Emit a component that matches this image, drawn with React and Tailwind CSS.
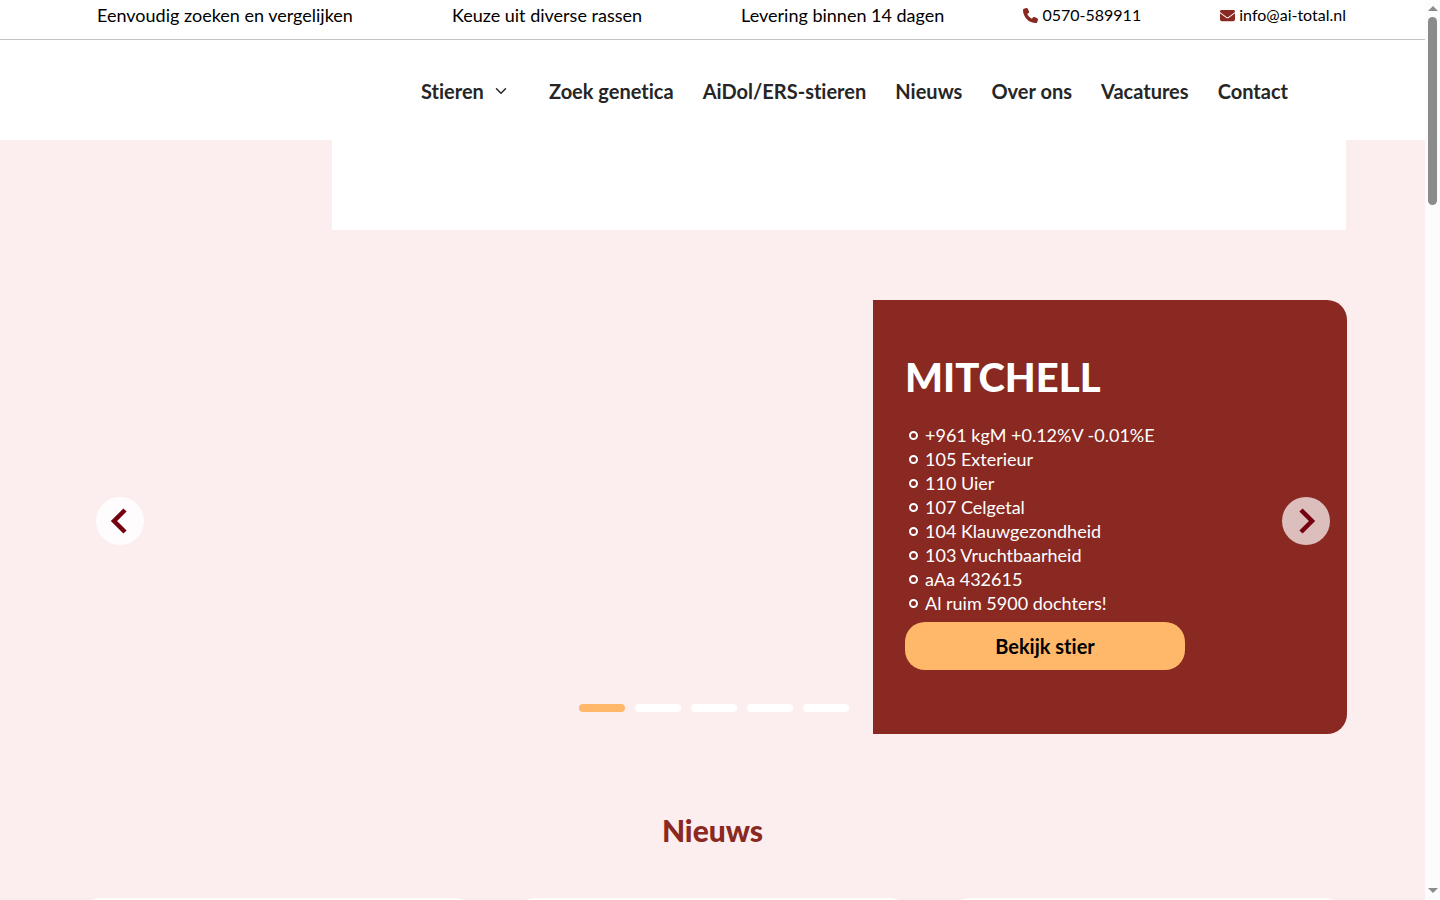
import { ChevronDown } from 'lucide-react';
import { FaPhone, FaEnvelope } from 'react-icons/fa6';

const menu = ['Zoek genetica', 'AiDol/ERS-stieren', 'Nieuws', 'Over ons', 'Vacatures', 'Contact'];

const kenmerken = [
  '+961 kgM +0.12%V -0.01%E',
  '105 Exterieur',
  '110 Uier',
  '107 Celgetal',
  '104 Klauwgezondheid',
  '103 Vruchtbaarheid',
  'aAa 432615',
  'Al ruim 5900 dochters!',
];

const TopBar = () => (
  <div className="h-10 border-b border-[#c4c4c8] pl-[97px] pr-[79px] flex items-start justify-between text-lg leading-[30px] text-black whitespace-nowrap">
    <span className="mr-5">Eenvoudig zoeken en vergelijken</span>
    <span className="mr-5">Keuze uit diverse rassen</span>
    <span>Levering binnen 14 dagen</span>
    <a href="tel:0570589911" className="flex items-center gap-1 text-base leading-[30px]">
      <FaPhone size={15} className="text-[#8a2822]" />0570-589911
    </a>
    <a href="mailto:info@ai-total.nl" className="flex items-center gap-1 text-base leading-[30px]">
      <FaEnvelope size={15} className="text-[#8a2822]" />info@ai-total.nl
    </a>
  </div>
);

const Header = () => (
  <header className="bg-white">
    <TopBar />
    <div className="h-[100px] pt-0.5 pr-[137px] flex items-center justify-end">
      <nav className="w-[867px] flex items-center justify-between text-xl font-bold text-[#262626] whitespace-nowrap">
        <a href="#stieren" className="flex items-center gap-2 pr-2.5">
          Stieren<ChevronDown size={18} strokeWidth={2} />
        </a>
        {menu.map((item) => <a key={item} href="#menu">{item}</a>)}
      </nav>
    </div>
  </header>
);

const Slider = () => (
  <section className="relative ml-20 mr-[78px] mt-[70px] flex justify-end">
    <div className="w-[474px] min-h-[434px] bg-[#8a2822] rounded-r-[20px] px-8 pt-[55px] pb-16 text-white">
      <h2 className="text-[40px] leading-[44px] font-black">MITCHELL</h2>
      <ul className="mt-6 text-lg leading-6">
        {kenmerken.map((regel) => (
          <li key={regel} className="flex items-center gap-[7px] pl-1">
            <span className="w-[9px] h-[9px] rounded-full border-2 border-white" />{regel}
          </li>
        ))}
      </ul>
      <button className="mt-[7px] w-[280px] h-12 rounded-[20px] bg-[#ffb86a] text-black text-xl font-bold">Bekijk stier</button>
    </div>
    <button aria-label="Vorige" className="absolute left-4 top-[197px] w-12 h-12 rounded-full bg-white/80 flex items-center justify-center">
      <svg width="24" height="28" viewBox="0 0 24 28" fill="none" stroke="#75000f" strokeWidth="4.5"><path d="M17 3 6 14l11 11" /></svg>
    </button>
    <button aria-label="Volgende" className="absolute right-[17px] top-[197px] w-12 h-12 rounded-full bg-white/70 flex items-center justify-center">
      <svg width="24" height="28" viewBox="0 0 24 28" fill="none" stroke="#75000f" strokeWidth="4.5"><path d="M7 3l11 11L7 25" /></svg>
    </button>
    <div className="absolute inset-x-0 bottom-[22px] flex justify-center gap-2.5">
      <button aria-label="Dia 1" className="w-[46px] h-2 rounded-full bg-[#ffb86a]" />
      {[2, 3, 4, 5].map((n) => <button key={n} aria-label={`Dia ${n}`} className="w-[46px] h-2 rounded-full bg-white" />)}
    </div>
  </section>
);

const ScrollBar = () => (
  <div className="w-[15px] shrink-0 bg-[#fcfcfc] flex flex-col items-center" aria-hidden="true">
    <svg width="15" height="17" viewBox="0 0 15 17" fill="#8b8b8b"><path d="M3 11 8 6l5 5z" /></svg>
    <div className="w-[9px] h-[188px] rounded-full bg-[#8b8b8b]" />
    <svg className="mt-auto" width="15" height="17" viewBox="0 0 15 17" fill="#8b8b8b"><path d="M3 5l5 5 5-5z" /></svg>
  </div>
);

const App = () => (
  <div className="h-screen flex overflow-hidden font-['Lato','Liberation_Sans',sans-serif] [font-variant-ligatures:none]">
    <div className="flex-1 min-w-0 bg-[#fceeee] overflow-hidden">
      <Header />
      <main>
        <div className="ml-[332px] mr-[79px] h-[90px] bg-white" />
        <Slider />
        <h2 className="mt-[78px] text-center text-[30px] leading-9 font-black text-[#8a2822]">Nieuws</h2>
        <div className="mt-[50px] px-20 grid grid-cols-3 gap-10">
          {[1, 2, 3].map((n) => <article key={n} className="h-80 rounded-[20px] bg-white" />)}
        </div>
      </main>
    </div>
    <ScrollBar />
  </div>
);

export default App;
